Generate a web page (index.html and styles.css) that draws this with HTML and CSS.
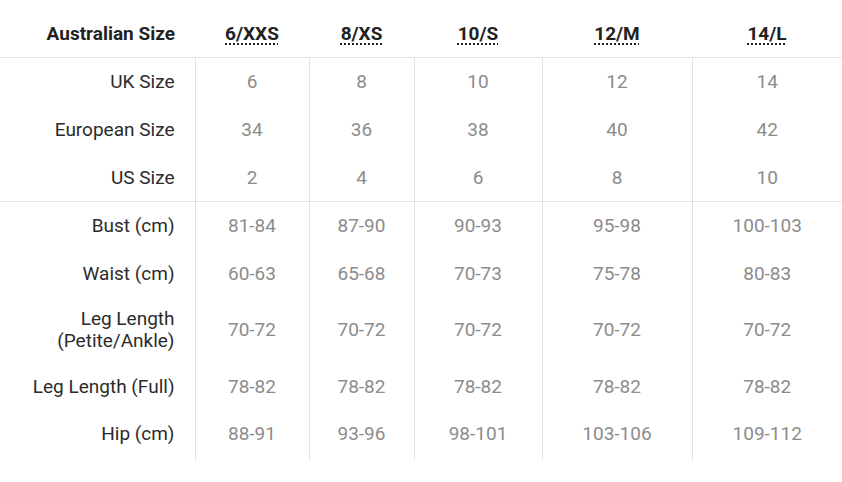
FILE: index.html
```html
<!DOCTYPE html>
<html>
<head>
<meta charset="utf-8">
<link rel="stylesheet" href="styles.css">
</head>
<body>
<div class="wrap">
<table class="size-table">
  <colgroup>
    <col class="c-label"><col class="c1"><col class="c2"><col class="c3"><col class="c4"><col class="c5">
  </colgroup>
  <thead>
    <tr>
      <th class="label">Australian Size</th>
      <th><abbr>6/XXS</abbr></th>
      <th><abbr>8/XS</abbr></th>
      <th><abbr>10/S</abbr></th>
      <th><abbr>12/M</abbr></th>
      <th><abbr>14/L</abbr></th>
    </tr>
  </thead>
  <tbody>
    <tr><th class="label">UK Size</th><td>6</td><td>8</td><td>10</td><td>12</td><td>14</td></tr>
    <tr><th class="label">European Size</th><td>34</td><td>36</td><td>38</td><td>40</td><td>42</td></tr>
    <tr><th class="label">US Size</th><td>2</td><td>4</td><td>6</td><td>8</td><td>10</td></tr>
  </tbody>
  <tbody class="measures">
    <tr><th class="label">Bust (cm)</th><td>81-84</td><td>87-90</td><td>90-93</td><td>95-98</td><td>100-103</td></tr>
    <tr><th class="label">Waist (cm)</th><td>60-63</td><td>65-68</td><td>70-73</td><td>75-78</td><td>80-83</td></tr>
    <tr class="tall"><th class="label">Leg Length<br>(Petite/Ankle)</th><td>70-72</td><td>70-72</td><td>70-72</td><td>70-72</td><td>70-72</td></tr>
    <tr><th class="label">Leg Length (Full)</th><td>78-82</td><td>78-82</td><td>78-82</td><td>78-82</td><td>78-82</td></tr>
    <tr class="last"><th class="label">Hip (cm)</th><td>88-91</td><td>93-96</td><td>98-101</td><td>103-106</td><td>109-112</td></tr>
  </tbody>
</table>
</div>
</body>
</html>
```
FILE: styles.css
```css
html, body {
  margin: 0;
  padding: 0;
  background: #ffffff;
}
body {
  font-family: Roboto, "Noto Sans", "Liberation Sans", sans-serif;
  font-size: 19px;
  color: #333333;
}
.wrap {
  padding-top: 9px;
}
.size-table {
  width: 842px;
  table-layout: fixed;
  border-collapse: collapse;
}
.c-label { width: 195px; }
.c1 { width: 114px; }
.c2 { width: 105px; }
.c3 { width: 128px; }
.c4 { width: 150px; }
.c5 { width: 150px; }

.size-table tbody tr,
.size-table thead tr {
  height: 48px;
}
.size-table th,
.size-table td {
  padding: 12px 0 10px;
  line-height: 22px;
  text-align: center;
  vertical-align: middle;
}
.size-table .tall th,
.size-table .tall td {
  padding-top: 11px;
  padding-bottom: 10px;
}
.size-table .last th,
.size-table .last td {
  padding-top: 13px;
  padding-bottom: 15px;
}
.size-table thead th {
  font-weight: 700;
  color: #222222;
  border-bottom: 1px solid #e2e2e2;
}
.size-table .label {
  text-align: right;
  padding-right: 20px;
  font-weight: 400;
  color: #2b2b2b;
}
.size-table thead .label {
  font-weight: 700;
  color: #222222;
}
abbr {
  text-decoration: underline dotted 2px;
  text-underline-offset: 4px;
  color: #222222;
}
.size-table td {
  color: #8c8c8c;
  border-left: 1px solid #e2e2e2;
}
.measures tr:first-child th,
.measures tr:first-child td {
  border-top: 1px solid #e2e2e2;
}
```
